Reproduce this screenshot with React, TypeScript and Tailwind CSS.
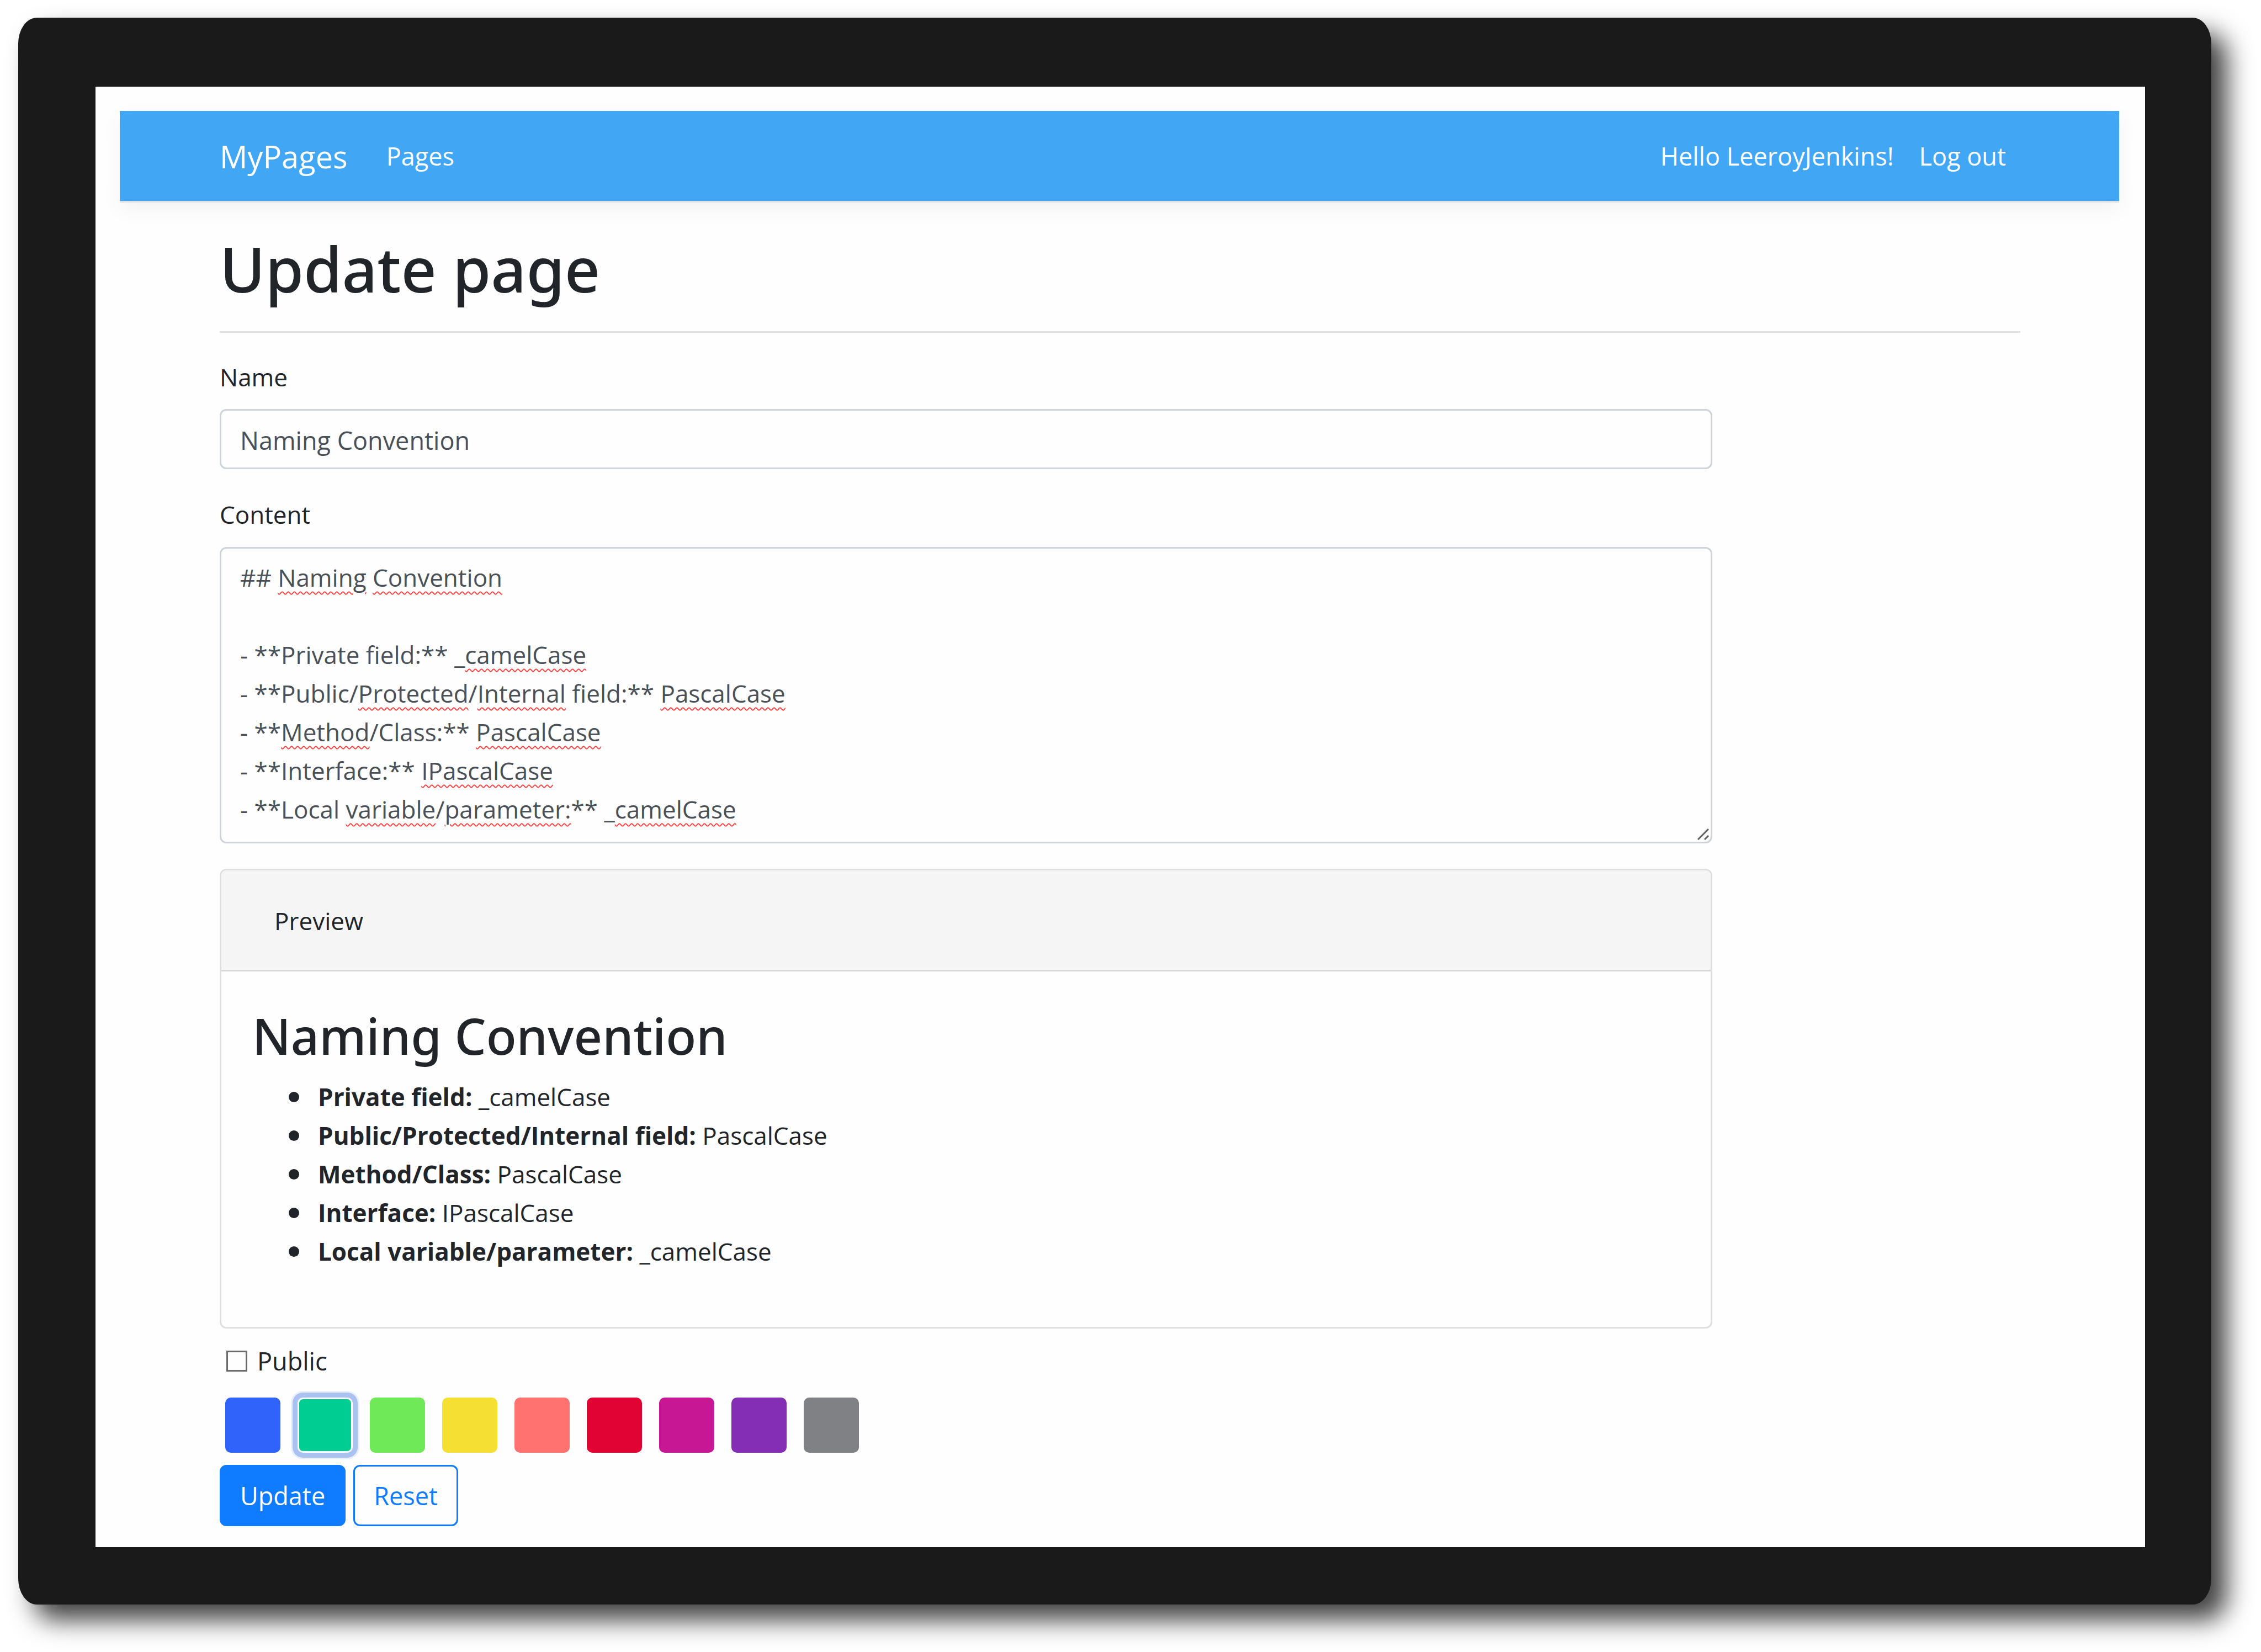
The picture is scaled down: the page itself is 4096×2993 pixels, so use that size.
import React, { useState } from "react";

type Part = { text: string; flagged?: boolean };

const CONTENT: Part[][] = [
  [{ text: "## " }, { text: "Naming", flagged: true }, { text: " " }, { text: "Convention", flagged: true }],
  [],
  [{ text: "- **Private field:** _" }, { text: "camelCase", flagged: true }],
  [
    { text: "- **Public/" },
    { text: "Protected", flagged: true },
    { text: "/" },
    { text: "Internal", flagged: true },
    { text: " field:** " },
    { text: "PascalCase", flagged: true },
  ],
  [{ text: "- **" }, { text: "Method", flagged: true }, { text: "/Class:** " }, { text: "PascalCase", flagged: true }],
  [{ text: "- **Interface:** " }, { text: "IPascalCase", flagged: true }],
  [
    { text: "- **Local " },
    { text: "variable", flagged: true },
    { text: "/" },
    { text: "parameter:", flagged: true },
    { text: "** _" },
    { text: "camelCase", flagged: true },
  ],
];

const PREVIEW = [
  ["Private field:", "_camelCase"],
  ["Public/Protected/Internal field:", "PascalCase"],
  ["Method/Class:", "PascalCase"],
  ["Interface:", "IPascalCase"],
  ["Local variable/parameter:", "_camelCase"],
];

const SWATCHES = [
  { name: "Blue", color: "bg-[#2f63fa]" },
  { name: "Teal", color: "bg-[#00cd92]" },
  { name: "Green", color: "bg-[#6fe957]" },
  { name: "Yellow", color: "bg-[#f4df32]" },
  { name: "Coral", color: "bg-[#ff7270]" },
  { name: "Red", color: "bg-[#e20335]" },
  { name: "Magenta", color: "bg-[#c81794]" },
  { name: "Purple", color: "bg-[#842db5]" },
  { name: "Gray", color: "bg-[#808184]" },
];

function NavBar() {
  return (
    <nav className="flex h-[166px] items-center border-b-[3px] border-[#dee2e6] bg-[#41a7f5] px-[181px] text-[45px] text-white shadow-[0_12px_35px_rgba(0,0,0,0.05)]">
      <a href="#home" className="text-[56px] leading-[70px]">MyPages</a>
      <a href="#pages" className="ml-[70px]">Pages</a>
      <div className="ml-auto flex gap-[46px] pr-[24px]">
        <a href="#account">Hello LeeroyJenkins!</a>
        <a href="#logout">Log out</a>
      </div>
    </nav>
  );
}

function ContentField() {
  const [value, setValue] = useState(
    CONTENT.map((line) => line.map((p) => p.text).join("")).join("\n")
  );
  return (
    <div className="relative grid">
      <textarea
        id="content"
        spellCheck={false}
        value={value}
        onChange={(e) => setValue(e.target.value)}
        className="h-[537px] w-full resize-none overflow-hidden rounded-[12px] border-[3px] border-[#ced4da] bg-transparent px-[34px] py-[17px] text-[#495057]"
      />
      {/* spelling marks laid over the text box */}
      <div
        aria-hidden="true"
        className="pointer-events-none absolute inset-0 whitespace-pre-wrap border-[3px] border-transparent px-[34px] py-[17px] text-transparent"
      >
        {CONTENT.map((line, i) => (
          <div key={i} className="min-h-[70px]">
            {line.map((p, j) => (
              <span
                key={j}
                className={p.flagged ? "underline decoration-[#ff4040] decoration-wavy decoration-[2px] underline-offset-[8px]" : ""}
              >
                {p.text}
              </span>
            ))}
          </div>
        ))}
      </div>
      <svg aria-hidden="true" className="pointer-events-none absolute right-[6px] bottom-[6px] h-[21px] w-[21px]" viewBox="0 0 21 21" fill="none" stroke="#606060" strokeWidth="3">
        <path d="M1 20L20 1M13 20L20 13" />
      </svg>
    </div>
  );
}

function Preview() {
  return (
    <section className="mt-[46px] rounded-[12px] border-[3px] border-[#dfdfdf] pb-[102px]">
      <header className="rounded-t-[9px] border-b-[3px] border-[#d7d7d7] bg-[#f5f5f5] px-[96px] pt-[56px] pb-[54px]">Preview</header>
      <h2 className="mt-[61px] px-[56px] font-['Noto_Sans',sans-serif] text-[90px] leading-[111px] font-[550]">Naming Convention</h2>
      <ul className="mt-[20px] flex flex-col pl-[57px]">
        {PREVIEW.map(([label, value]) => (
          <li key={label} className="flex items-center pl-[65px]">
            <span className="mr-[34px] size-[19px] rounded-full bg-[#212529]" />
            <p>
              <strong className="font-bold">{label}</strong> {value}
            </p>
          </li>
        ))}
      </ul>
    </section>
  );
}

export default function App() {
  const [name, setName] = useState("Naming Convention");
  const [isPublic, setIsPublic] = useState(false);
  const [selected, setSelected] = useState("Teal");

  return (
    <div className="bg-white pt-[32px] pr-[90px] pb-[86px] pl-[33px] font-['Open_Sans','Noto_Sans',sans-serif] text-[44px] leading-[70px] text-[#212529]">
      <div className="rounded-[34px/47px] bg-[#1a1a1a] pt-[125px] pr-[120px] pb-[104px] pl-[140px] shadow-[28px_28px_46px_rgba(0,0,0,0.75)]">
        <div className="overflow-hidden bg-[#fefefe] pt-[44px] pr-[47px] pb-[38px] pl-[44px]">
          <NavBar />
          <main className="pr-[137px] pl-[139px]">
            <div className="px-[42px]">
              <h1 className="mt-[50px] font-['Noto_Sans',sans-serif] text-[112px] leading-[139px] font-[550]">Update page</h1>
              <hr className="mt-[44px] border-t-[3px] border-[#e2e2e2]" />
            </div>
            <form className="mt-[45px] w-10/12 px-[42px]" onSubmit={(e) => e.preventDefault()}>
              <label htmlFor="name" className="block">Name</label>
              <input
                id="name"
                type="text"
                value={name}
                onChange={(e) => setName(e.target.value)}
                className="mt-[23px] block h-[109px] w-full rounded-[12px] border-[3px] border-[#ced4da] px-[34px] pt-[4px] text-[45px] text-[#495057]"
              />
              <label htmlFor="content" className="mt-[47px] mb-[24px] block">Content</label>
              <ContentField />
              <Preview />
              <label className="mt-[24px] flex items-center gap-[18px] pl-[12px] text-[45px]">
                <input
                  type="checkbox"
                  checked={isPublic}
                  onChange={(e) => setIsPublic(e.target.checked)}
                  className="size-[38px] appearance-none border-[3px] border-[#6b6b6b] checked:bg-[#0f7cff]"
                />
                Public
              </label>
              <div className="mt-[31px] flex gap-[31px] pl-[10px]">
                {SWATCHES.map((s) => (
                  <button
                    key={s.name}
                    type="button"
                    aria-label={s.name}
                    aria-pressed={selected === s.name}
                    onClick={() => setSelected(s.name)}
                    className={`size-[100px] rounded-[10px] ${s.color} ${
                      selected === s.name
                        ? "border-[3px] border-white shadow-[0_0_0_9px_#a9c2f0,0_0_0_12px_#e8eefb]"
                        : ""
                    }`}
                  />
                ))}
              </div>
              <div className="mt-[22px] flex gap-[14px] text-[45px]">
                <button type="submit" className="h-[111px] rounded-[12px] border-[3px] border-[#0f7cff] bg-[#0f7cff] px-[34px] text-white">Update</button>
                <button type="reset" className="h-[111px] rounded-[12px] border-[3px] border-[#0f7cff] px-[34px] text-[#0f7cff]">Reset</button>
              </div>
            </form>
          </main>
        </div>
      </div>
    </div>
  );
}
